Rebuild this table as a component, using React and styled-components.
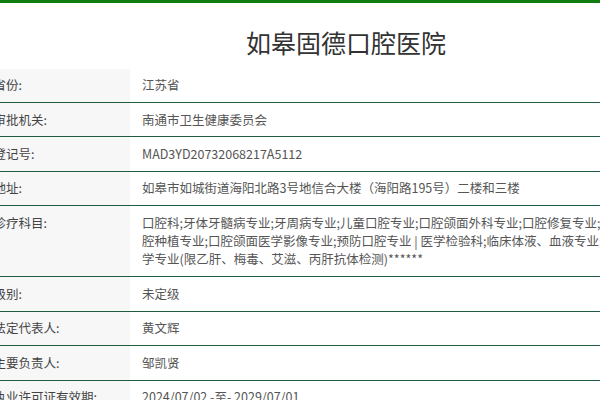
import React from "react";
import styled, { createGlobalStyle } from "styled-components";

const Global = createGlobalStyle`
  html, body { margin: 0; padding: 0; background: #fff; }
  body {
    width: 600px; height: 400px; overflow: hidden;
    font-family: "Noto Sans CJK SC", "Noto Sans", sans-serif;
  }
`;

const Page = styled.div`
  width: 600px;
  border-top: 3px solid #117d11;
  overflow: hidden;
`;

const Title = styled.h1`
  margin: 0;
  padding: 21.5px 0 9px 92px;
  text-align: center;
  font-size: 25px;
  line-height: 35px;
  font-weight: 400;
  color: #333;
`;

const Table = styled.div`
  margin-left: -16px;
  width: 900px;
`;

const Row = styled.div`
  display: flex;
  border-bottom: 1px solid #1f5c40;
  font-size: 12.5px;
  line-height: 18.25px;
`;

const Label = styled.div`
  flex: 0 0 146px;
  box-sizing: border-box;
  padding: 7.6px 0 7.6px 9.5px;
  background: #f7f7f7;
  color: #444;
  white-space: nowrap;
`;

const Value = styled.div`
  flex: 1;
  padding: 7.6px 0 7.6px 12px;
  color: #555;
  white-space: nowrap;
`;

const rows = [
  ["省份:", ["江苏省"]],
  ["审批机关:", ["南通市卫生健康委员会"]],
  ["登记号:", ["MAD3YD20732068217A5112"]],
  ["地址:", ["如皋市如城街道海阳北路3号地信合大楼（海阳路195号）二楼和三楼"]],
  [
    "诊疗科目:",
    [
      "口腔科;牙体牙髓病专业;牙周病专业;儿童口腔专业;口腔颌面外科专业;口腔修复专业;口",
      "腔种植专业;口腔颌面医学影像专业;预防口腔专业 | 医学检验科;临床体液、血液专业;临床免疫、血清",
      "学专业(限乙肝、梅毒、艾滋、丙肝抗体检测)******",
    ],
  ],
  ["级别:", ["未定级"]],
  ["法定代表人:", ["黄文辉"]],
  ["主要负责人:", ["邹凯贤"]],
  ["执业许可证有效期:", ["2024/07/02 -至- 2029/07/01"]],
];

export default function App() {
  return (
    <>
      <Global />
      <Page>
        <Title>如皋固德口腔医院</Title>
        <Table>
          {rows.map(([label, lines]) => (
            <Row key={label}>
              <Label>{label}</Label>
              <Value>
                {lines.map((l, i) => (
                  <React.Fragment key={i}>
                    {i > 0 && <br />}
                    {l}
                  </React.Fragment>
                ))}
              </Value>
            </Row>
          ))}
        </Table>
      </Page>
    </>
  );
}
